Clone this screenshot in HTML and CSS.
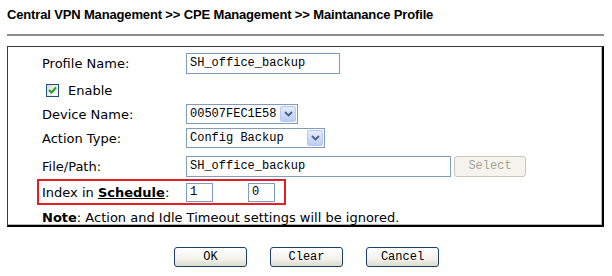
FILE: index.html
```html
<!DOCTYPE html>
<html lang="en">

<head>
    <meta charset="UTF-8">
    <title>Maintanance Profile</title>
    <link rel="stylesheet" href="styles.css">
</head>

<body>
    <h1 class="title">Central VPN Management &gt;&gt; CPE Management &gt;&gt; Maintanance Profile</h1>
    <hr class="sep">

    <div class="panel">
        <div class="row r-name">
            <span class="label">Profile Name:</span>
            <span class="field w-name">SH_office_backup</span>
        </div>
        <div class="row r-enable">
            <span class="check">
                <svg width="9" height="9" viewBox="0 0 9 9"><path d="M1 4 L3.5 6.5 L8 1.5" fill="none" stroke="#21a121" stroke-width="2"/></svg>
            </span>
            <span>Enable</span>
        </div>
        <div class="row r-dev">
            <span class="label">Device Name:</span>
            <span class="field sel w-dev">00507FEC1E58<span class="arrow"><svg width="9" height="6" viewBox="0 0 9 6"><path d="M1 1 L4.5 4.5 L8 1" fill="none" stroke="#4d6185" stroke-width="1.8"/></svg></span></span>
        </div>
        <div class="row r-act">
            <span class="label">Action Type:</span>
            <span class="field sel w-act">Config Backup<span class="arrow"><svg width="9" height="6" viewBox="0 0 9 6"><path d="M1 1 L4.5 4.5 L8 1" fill="none" stroke="#4d6185" stroke-width="1.8"/></svg></span></span>
        </div>
        <div class="row r-file">
            <span class="label">File/Path:</span>
            <span class="field w-file">SH_office_backup</span>
            <span class="btn-dis">Select</span>
        </div>
        <div class="row r-index">
            <span class="label">Index in <b class="link">Schedule</b>:</span>
            <span class="field w-idx">1</span>
            <span class="field w-idx">0</span>
        </div>
        <div class="row r-note">
            <span><b>Note</b>: Action and Idle Timeout settings will be ignored.</span>
        </div>
    </div>

    <div class="actions">
        <span class="btn">OK</span>
        <span class="btn">Clear</span>
        <span class="btn">Cancel</span>
    </div>
</body>

</html>
```

FILE: styles.css
```css
body {
    margin: 0;
    padding: 0 8px 0 7px;
    background: #fff;
    color: #000;
    font-family: "DejaVu Sans", Verdana, sans-serif;
    font-size: 13px;
}

.title {
    margin: 0;
    padding-top: 7px;
    height: 16px;
    font-family: "Liberation Sans", Arial, sans-serif;
    font-size: 13px;
    font-weight: bold;
    line-height: 15px;
    letter-spacing: -0.15px;
}

.sep {
    margin: 11px 0 0 0;
    border: none;
    border-top: 2px solid #8c8c8c;
    height: 0;
}

.panel {
    margin-top: 10px;
    height: 175px;
    border-style: solid;
    border-color: #3c3c3c #000 #000 #3c3c3c;
    border-width: 1px 2px 2px 1px;
    box-shadow: inset -1px -1px 0 #b8b8b8;
    padding: 3px 0 0 29px;
}

.row {
    display: flex;
    align-items: center;
    padding-left: 5px;
}

.label {
    width: 144px;
    flex: none;
}

.r-name { height: 26px; }
.r-enable { height: 28px; padding-left: 9px; }
.r-dev { height: 20px; }
.r-act { height: 20px; margin-top: 4px; }
.r-file { height: 22px; margin-top: 7px; }
.r-index {
    width: 242px;
    height: 22px;
    margin-top: 2px;
    padding-left: 3px;
    border: 2px solid #e31e24;
}
.r-note { height: 25px; }

.field {
    box-sizing: border-box;
    flex: none;
    display: flex;
    align-items: center;
    height: 21px;
    padding: 0 3px;
    border: 1px solid #7f9db9;
    background: #fff;
    font-family: "Liberation Mono", "Courier New", monospace;
    font-size: 12px;
}

.w-name { width: 154px; }
.w-file { width: 265px; }
.w-idx { width: 27px; height: 19px; margin-right: 35px; }

.sel {
    height: 20px;
    padding: 0 1px 0 3px;
    justify-content: space-between;
}
.w-dev { width: 112px; }
.w-act { width: 139px; }

.arrow {
    box-sizing: border-box;
    width: 16px;
    height: 16px;
    display: flex;
    align-items: center;
    justify-content: center;
    border: 1px solid #b7c9ef;
    border-radius: 2px;
    background: linear-gradient(#e4ecfd, #bccdf5);
}

.check {
    box-sizing: border-box;
    width: 13px;
    height: 13px;
    margin-right: 9px;
    display: flex;
    align-items: center;
    justify-content: center;
    border: 1px solid #1c5180;
    background: linear-gradient(135deg, #dcdcd7, #fff);
}

.btn-dis {
    box-sizing: border-box;
    width: 72px;
    height: 21px;
    margin-left: 3px;
    display: flex;
    align-items: center;
    justify-content: center;
    border: 1px solid #c9c7ba;
    border-radius: 3px;
    background: #f4f3ee;
    color: #a5a596;
    font-family: "Liberation Mono", "Courier New", monospace;
    font-size: 12px;
}

.link {
    text-decoration: underline;
}

.actions {
    display: flex;
    justify-content: center;
    gap: 23px;
    margin-top: 20px;
    padding-left: 2px;
}

.btn {
    box-sizing: border-box;
    width: 73px;
    height: 20px;
    display: flex;
    align-items: center;
    justify-content: center;
    border: 1px solid #1c3f6e;
    border-radius: 3px;
    background: linear-gradient(#ffffff 0%, #f3f2ec 60%, #dedbcd 100%);
    font-family: "Liberation Mono", "Courier New", monospace;
    font-size: 12px;
}
```
